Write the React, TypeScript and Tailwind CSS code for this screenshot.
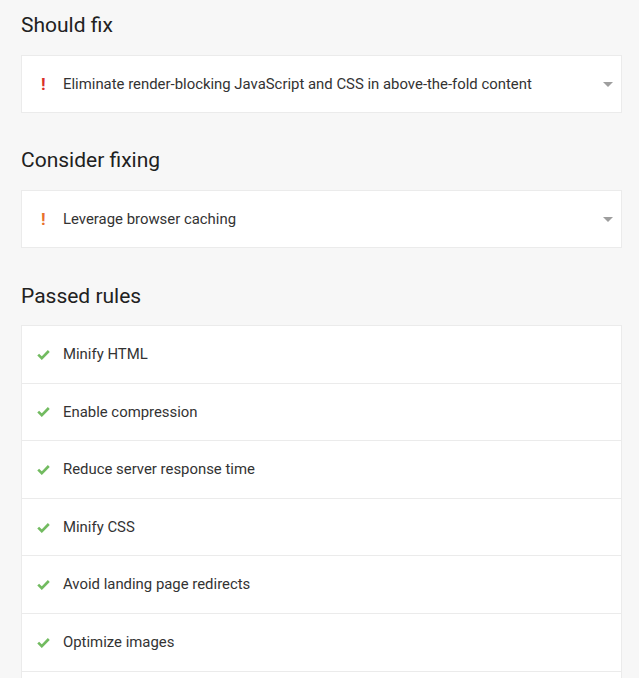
import React from 'react';

const font = { fontFamily: 'Roboto, "Liberation Sans", sans-serif' };

const Bang: React.FC<{ color: string }> = ({ color }) => (
  <span className={`w-[42px] shrink-0 pl-[19px] text-[17px] font-bold leading-none ${color}`}>!</span>
);

const Check: React.FC = () => (
  <span className="w-[42px] shrink-0 pl-[15px] flex items-center">
    <svg width="13" height="11" viewBox="0 0 13 11">
      <path d="M1.2 5.6l3.6 3.6L11.8 2" fill="none" stroke="#72bb60" strokeWidth="2.6" />
    </svg>
  </span>
);

const Caret: React.FC = () => (
  <svg width="10" height="5" viewBox="0 0 10 5" className="ml-auto mr-[8px] fill-[#9e9e9e]">
    <path d="M0 0h10L5 5z" />
  </svg>
);

const Heading: React.FC<{ children: React.ReactNode; className?: string }> = ({ children, className }) => (
  <h2 className={`text-[21px] leading-[28px] font-normal text-[#212121] ${className ?? ''}`}>{children}</h2>
);

const IssueCard: React.FC<{ color: string; label: string }> = ({ color, label }) => (
  <div className="bg-white border border-[#ebebeb] h-[58px] flex items-center">
    <Bang color={color} />
    <span className="text-[14.9px] text-[#333333] -ml-[1px]">{label}</span>
    <Caret />
  </div>
);

const passed = [
  'Minify HTML',
  'Enable compression',
  'Reduce server response time',
  'Minify CSS',
  'Avoid landing page redirects',
  'Optimize images',
];

export default function App() {
  return (
    <div className="h-[678px] overflow-hidden bg-[#f7f7f7] pl-[21px] pr-[17px] pt-[11px]" style={font}>
      <Heading>Should fix</Heading>
      <div className="mt-[16px]">
        <IssueCard color="text-[#d9302a]" label="Eliminate render-blocking JavaScript and CSS in above-the-fold content" />
      </div>

      <Heading className="mt-[33px]">Consider fixing</Heading>
      <div className="mt-[16px]">
        <IssueCard color="text-[#e8702c]" label="Leverage browser caching" />
      </div>

      <Heading className="mt-[34px]">Passed rules</Heading>
      <div className="mt-[15px] bg-white border border-[#ebebeb]">
        {passed.map((p) => (
          <div key={p} className="h-[57.6px] flex items-center border-b border-[#ebebeb]">
            <Check />
            <span className="text-[14.9px] text-[#333333] -ml-[1px]">{p}</span>
          </div>
        ))}
        <div className="h-[57.6px]" />
      </div>
    </div>
  );
}
